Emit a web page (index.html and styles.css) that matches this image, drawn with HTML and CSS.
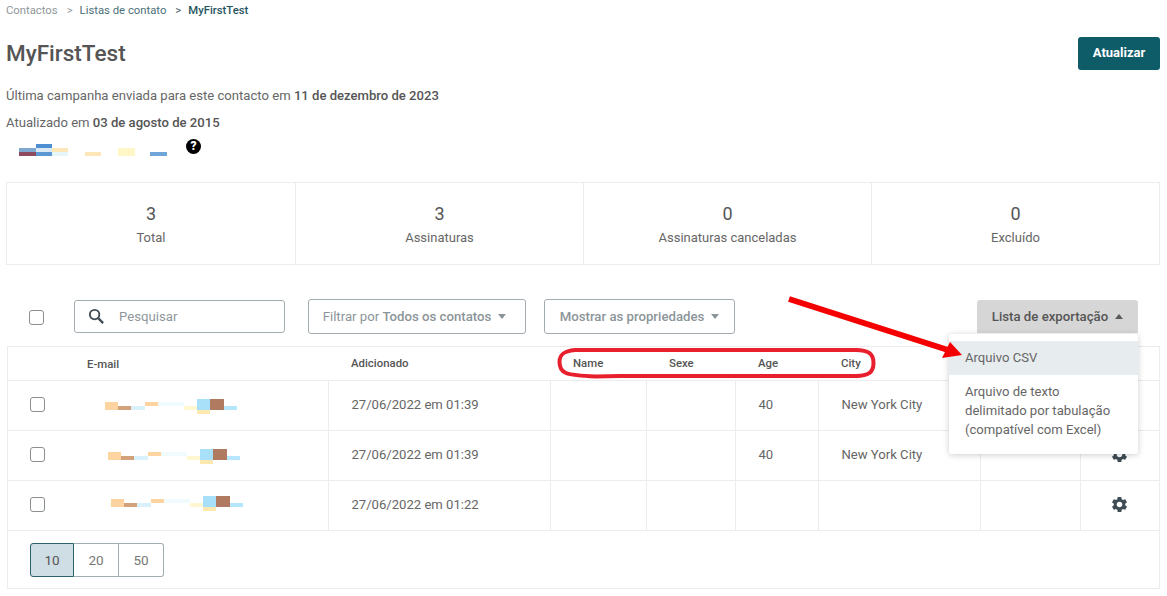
FILE: index.html
```html
<!DOCTYPE html>
<html lang="pt">
<head>
<meta charset="utf-8">
<title>MyFirstTest</title>
<link rel="stylesheet" href="styles.css">
</head>
<body>
<svg class="defs" width="0" height="0" aria-hidden="true">
  <symbol id="blur" viewBox="0 0 133 16">
    <rect x="0" y="3" width="13" height="8" fill="#fdd3a0"/>
    <rect x="13" y="7" width="13" height="4" fill="#d4a27a"/>
    <rect x="26" y="7" width="14" height="4" fill="#d8f1fb"/>
    <rect x="40" y="3" width="13" height="4" fill="#fdd3a0"/>
    <rect x="53" y="3" width="26" height="4" fill="#effbfd"/>
    <rect x="79" y="7" width="13" height="4" fill="#fff7d0"/>
    <rect x="92" y="0" width="13" height="11" fill="#a8e0fa"/>
    <rect x="92" y="11" width="13" height="4" fill="#fde8b0"/>
    <rect x="105" y="0" width="14" height="11" fill="#b07a60"/>
    <rect x="119" y="7" width="13" height="4" fill="#b5e6fb"/>
  </symbol>
  <symbol id="gear" viewBox="0 0 24 24">
    <path fill="#3f4c54" d="M19.14 12.94c.04-.3.06-.61.06-.94 0-.32-.02-.64-.07-.94l2.03-1.58c.18-.14.23-.41.12-.61l-1.92-3.32c-.12-.22-.37-.29-.59-.22l-2.39.96c-.5-.38-1.03-.7-1.62-.94l-.36-2.54c-.04-.24-.24-.41-.48-.41h-3.84c-.24 0-.43.17-.47.41l-.36 2.54c-.59.24-1.13.57-1.62.94l-2.39-.96c-.22-.08-.47 0-.59.22L2.74 8.87c-.12.21-.08.47.12.61l2.03 1.58c-.05.3-.09.63-.09.94s.02.64.07.94l-2.03 1.58c-.18.14-.23.41-.12.61l1.92 3.32c.12.22.37.29.59.22l2.39-.96c.5.38 1.03.7 1.62.94l.36 2.54c.05.24.24.41.48.41h3.84c.24 0 .44-.17.47-.41l.36-2.54c.59-.24 1.13-.56 1.62-.94l2.39.96c.22.08.47 0 .59-.22l1.92-3.32c.12-.22.07-.47-.12-.61l-2.01-1.58zM12 15.6c-1.98 0-3.6-1.62-3.6-3.6s1.62-3.6 3.6-3.6 3.6 1.62 3.6 3.6-1.62 3.6-3.6 3.6z"/>
  </symbol>
</svg>

<nav class="breadcrumb">
  <span class="crumb-root">Contactos</span>
  <span class="crumb-sep">&gt;</span>
  <span class="crumb-mid">Listas de contato</span>
  <span class="crumb-sep crumb-sep-dark">&gt;</span>
  <span class="crumb-current">MyFirstTest</span>
</nav>

<header class="page-head">
  <h1 class="title">MyFirstTest</h1>
  <button class="update">Atualizar</button>
</header>

<section class="meta">
  <p>Última campanha enviada para este contacto em <b>11 de dezembro de 2023</b></p>
  <p>Atualizado em <b>03 de agosto de 2015</b></p>
  <div class="tags">
    <svg class="tags-blur" width="150" height="14" viewBox="0 0 150 14" aria-hidden="true">
      <rect x="0" y="4" width="17" height="4" fill="#7fa8d0"/>
      <rect x="0" y="8" width="17" height="4" fill="#8e4a5e"/>
      <rect x="17" y="0" width="16" height="4" fill="#4d8fd0"/>
      <rect x="17" y="4" width="16" height="4" fill="#dce9f4"/>
      <rect x="17" y="8" width="16" height="4" fill="#5b97d3"/>
      <rect x="33" y="4" width="16" height="4" fill="#fde6b8"/>
      <rect x="33" y="8" width="16" height="4" fill="#e6f6f8"/>
      <rect x="66" y="8" width="16" height="4" fill="#fde6b8"/>
      <rect x="99" y="4" width="17" height="8" fill="#fff7c8"/>
      <rect x="131" y="8" width="17" height="4" fill="#6fa5d8"/>
    </svg>
    <span class="help">?</span>
  </div>
</section>

<section class="stats">
  <div class="stat"><strong>3</strong><span>Total</span></div>
  <div class="stat"><strong>3</strong><span>Assinaturas</span></div>
  <div class="stat"><strong>0</strong><span>Assinaturas canceladas</span></div>
  <div class="stat"><strong>0</strong><span>Excluído</span></div>
</section>

<section class="toolbar">
  <span class="check check-all"></span>
  <label class="search">
    <svg width="17" height="17" viewBox="0 0 18 18" aria-hidden="true">
      <circle cx="7" cy="7" r="5" fill="none" stroke="#3f4c54" stroke-width="2"/>
      <path d="M11 11l5 5" stroke="#3f4c54" stroke-width="2.4"/>
    </svg>
    <span>Pesquisar</span>
  </label>
  <button class="select select-filter"><span>Filtrar por <b>Todos os contatos</b></span><i class="caret"></i></button>
  <button class="select select-props"><b>Mostrar as propriedades</b><i class="caret"></i></button>
  <button class="export"><b>Lista de exportação</b><i class="caret caret-up"></i></button>
</section>

<section class="card">
  <table class="contacts">
    <colgroup>
      <col class="c-check"><col class="c-email"><col class="c-date"><col class="c-name"><col class="c-sex"><col class="c-age"><col class="c-city"><col class="c-extra"><col class="c-gear">
    </colgroup>
    <thead>
      <tr>
        <th></th><th class="th-email">E-mail</th><th>Adicionado</th><th>Name</th><th>Sexe</th><th>Age</th><th>City</th><th></th><th></th>
      </tr>
    </thead>
    <tbody>
      <tr>
        <td class="td-check"><span class="check"></span></td>
        <td class="td-email"><svg class="blur blur-1"><use href="#blur"/></svg></td>
        <td>27/06/2022 em 01:39</td><td></td><td></td><td>40</td><td>New York City</td><td></td><td class="td-gear"><svg class="gear"><use href="#gear"/></svg></td>
      </tr>
      <tr>
        <td class="td-check"><span class="check"></span></td>
        <td class="td-email"><svg class="blur blur-2"><use href="#blur"/></svg></td>
        <td>27/06/2022 em 01:39</td><td></td><td></td><td>40</td><td>New York City</td><td></td><td class="td-gear"><svg class="gear"><use href="#gear"/></svg></td>
      </tr>
      <tr>
        <td class="td-check"><span class="check"></span></td>
        <td class="td-email"><svg class="blur blur-3"><use href="#blur"/></svg></td>
        <td>27/06/2022 em 01:22</td><td></td><td></td><td></td><td></td><td></td><td class="td-gear"><svg class="gear"><use href="#gear"/></svg></td>
      </tr>
    </tbody>
  </table>
  <div class="pager">
    <button class="page page-active">10</button><button class="page">20</button><button class="page">50</button>
  </div>
</section>

<ul class="menu">
  <li class="menu-hover">Arquivo CSV</li>
  <li>Arquivo de texto delimitado por tabulação (compatível com Excel)</li>
</ul>

<svg class="annotation" width="1167" height="596" viewBox="0 0 1167 596" aria-hidden="true">
  <path d="M575 350 H856 C868 350.500 873.500 353 873.500 363 C873.500 373 868 375.500 856 376 H620 L596 376.500 C583 376 572 375.500 566 373 C561 371 559.500 367 559.500 362 C559.500 355 563 351 575 350 Z" fill="none" stroke="#e8202e" stroke-width="4"/>
  <path d="M789 299 L948 350" stroke="#f40000" stroke-width="6" fill="none"/>
  <path d="M962 355 L942 358 L950 342 Z" fill="#f40000"/>
</svg>
</body>
</html>
```
FILE: styles.css
```css
* { box-sizing: border-box; }

html, body { margin: 0; padding: 0; }

body {
  width: 1167px;
  height: 596px;
  overflow: hidden;
  position: relative;
  background: #fff;
  color: #5a5a5a;
  font-family: Roboto, "Liberation Sans", sans-serif;
  font-size: 13.100px;
}

.defs { position: absolute; }

.breadcrumb {
  height: 22px;
  padding-left: 6px;
  display: flex;
  align-items: center;
  font-size: 11.300px;
  line-height: 22px;
}

.crumb-root { color: #8f979b; }
.crumb-mid { color: #4b6f78; }
.crumb-current { color: #1f5560; font-weight: 500; }
.crumb-sep { color: #8f979b; margin: 0 7px 0 9px; }
.crumb-sep-dark { color: #44595f; }

.page-head {
  margin-top: 15px;
  padding: 0 7px 0 6px;
  height: 33px;
  display: flex;
  align-items: center;
  justify-content: space-between;
}

.title {
  margin: 0 0 2px;
  font-size: 22.500px;
  font-weight: 500;
  color: #555;
}

.update {
  width: 82px;
  height: 33px;
  padding: 0 0 2px;
  border: 0;
  border-radius: 3px;
  background: #0f5c69;
  color: #fff;
  font: 700 13px Roboto, sans-serif;
}

.meta { margin-top: 12px; padding-left: 6px; }

.meta p {
  margin: 0;
  height: 27px;
  line-height: 27px;
  font-size: 13.100px;
  color: #666;
}

.meta b { font-weight: 500; color: #555; }

.tags {
  height: 25px;
  display: flex;
  align-items: flex-start;
  padding-left: 13px;
}

.tags-blur { margin-top: 8px; }

.help {
  margin: 3px 0 0 17px;
  width: 15px;
  height: 15px;
  border-radius: 50%;
  background: #000;
  color: #fff;
  font-size: 12px;
  font-weight: 900;
  line-height: 15px;
  text-align: center;
}

.stats {
  margin: 21px 7px 0 6px;
  height: 83px;
  display: grid;
  grid-template-columns: repeat(4, 1fr);
  border: 1px solid #ececec;
}

.stat {
  display: flex;
  flex-direction: column;
  align-items: center;
  padding-top: 20px;
  border-left: 1px solid #ececec;
}

.stat:first-child { border-left: 0; }

.stat strong {
  font-size: 18px;
  font-weight: 400;
  line-height: 22px;
  color: #555;
}

.stat span {
  margin-top: 4px;
  font-size: 13px;
  line-height: 18px;
  color: #666;
}

.toolbar {
  margin-top: 33px;
  height: 36px;
  display: flex;
  align-items: center;
  padding-left: 29px;
}

.check {
  display: block;
  width: 15px;
  height: 15px;
  border: 1px solid #8a8f93;
  border-radius: 3px;
  background: #fff;
}

.check-all { margin: 2px 30px 0 0; }

.search {
  width: 211px;
  height: 33px;
  display: flex;
  align-items: center;
  gap: 14px;
  padding-left: 13px;
  border: 1px solid #a3acb0;
  border-radius: 3px;
  color: #8f979b;
  font-size: 13.200px;
}

.select {
  height: 35px;
  padding: 0;
  display: flex;
  align-items: center;
  justify-content: center;
  gap: 4px;
  background: #fff;
  border: 1px solid #a3acb0;
  border-radius: 3px;
  color: #8b9599;
  font: 400 13.200px Roboto, sans-serif;
}

.select b { font-weight: 500; }

.select-filter { width: 218px; margin-left: 23px; padding-right: 5px; }
.select-props { width: 191px; margin-left: 18px; }

.caret {
  display: block;
  width: 0;
  height: 0;
  margin-left: 3px;
  border-left: 4px solid transparent;
  border-right: 4px solid transparent;
  border-top: 5px solid #8b9599;
}

.caret-up {
  border-top: 0;
  border-bottom: 5px solid #5a5a5a;
  margin-left: 7px;
}

.export {
  width: 161px;
  height: 33px;
  margin-left: auto;
  margin-right: 29px;
  display: flex;
  align-items: center;
  justify-content: center;
  padding: 0;
  border: 0;
  border-radius: 3px 3px 0 0;
  background: #d6d6d6;
  color: #555;
  font: 500 13.200px Roboto, sans-serif;
}

.export b { font-weight: 500; }

.card {
  margin: 12px 7px 0;
  border: 1px solid #ececec;
  height: 243px;
}

.contacts {
  width: 1151px;
  table-layout: fixed;
  border-collapse: collapse;
}

.c-check { width: 59px; }
.c-email { width: 261px; }
.c-date { width: 222px; }
.c-name { width: 96px; }
.c-sex { width: 89px; }
.c-age { width: 83px; }
.c-city { width: 162px; }
.c-extra { width: 100px; }
.c-gear { width: 79px; }

.contacts th {
  height: 33px;
  padding: 0 0 1px 23px;
  text-align: left;
  font-size: 11.400px;
  font-weight: 500;
  color: #555;
  border-bottom: 1px solid #ececec;
}

.contacts .th-email { padding: 2px 0 0 20px; }

.contacts td {
  height: 50px;
  padding: 0 0 2px 23px;
  font-size: 13.100px;
  color: #666;
  border: 1px solid #ececec;
}

.contacts td:first-child { border-left: 0; }
.contacts td:last-child { border-right: 0; }

.contacts .td-check { padding: 0 0 2px 22px; border-right: 0; }
.contacts .td-email { padding: 0; border-left: 0; }
.contacts .td-gear { padding: 0 0 2px; text-align: center; }

.blur { display: block; width: 133px; height: 16px; }
.blur-1 { margin: 4px 0 0 38px; }
.blur-2 { margin: 4px 0 0 41px; }
.blur-3 { margin: 0 0 2px 44px; }

.gear { display: block; width: 19px; height: 19px; margin: 0 auto; }

.pager { padding: 12px 0 0 22px; display: flex; }

.page {
  width: 45px;
  height: 34px;
  padding: 0;
  border: 1px solid #a3acb0;
  border-left: 0;
  background: #fff;
  color: #777;
  font: 400 13.500px Roboto, sans-serif;
}

.page:first-child { border-left: 1px solid #a3acb0; border-radius: 3px 0 0 3px; width: 44px; }
.page:last-child { border-radius: 0 3px 3px 0; }

.page-active.page-active {
  background: #cfdde4;
  border-color: #2a5f6c;
  color: #555;
}

.menu {
  position: absolute;
  left: 949px;
  top: 334px;
  width: 189px;
  height: 120px;
  margin: 0;
  padding: 7px 0 0;
  list-style: none;
  background: #fff;
  border-radius: 3px;
  box-shadow: 0 1px 6px rgba(0, 0, 0, .2);
  font-size: 13.100px;
  line-height: 19px;
  color: #666;
}

.menu li { padding: 7px 16px 8px; }

.menu .menu-hover { background: #e7ecee; }

.annotation {
  position: absolute;
  left: 0;
  top: 0;
  pointer-events: none;
}
```
